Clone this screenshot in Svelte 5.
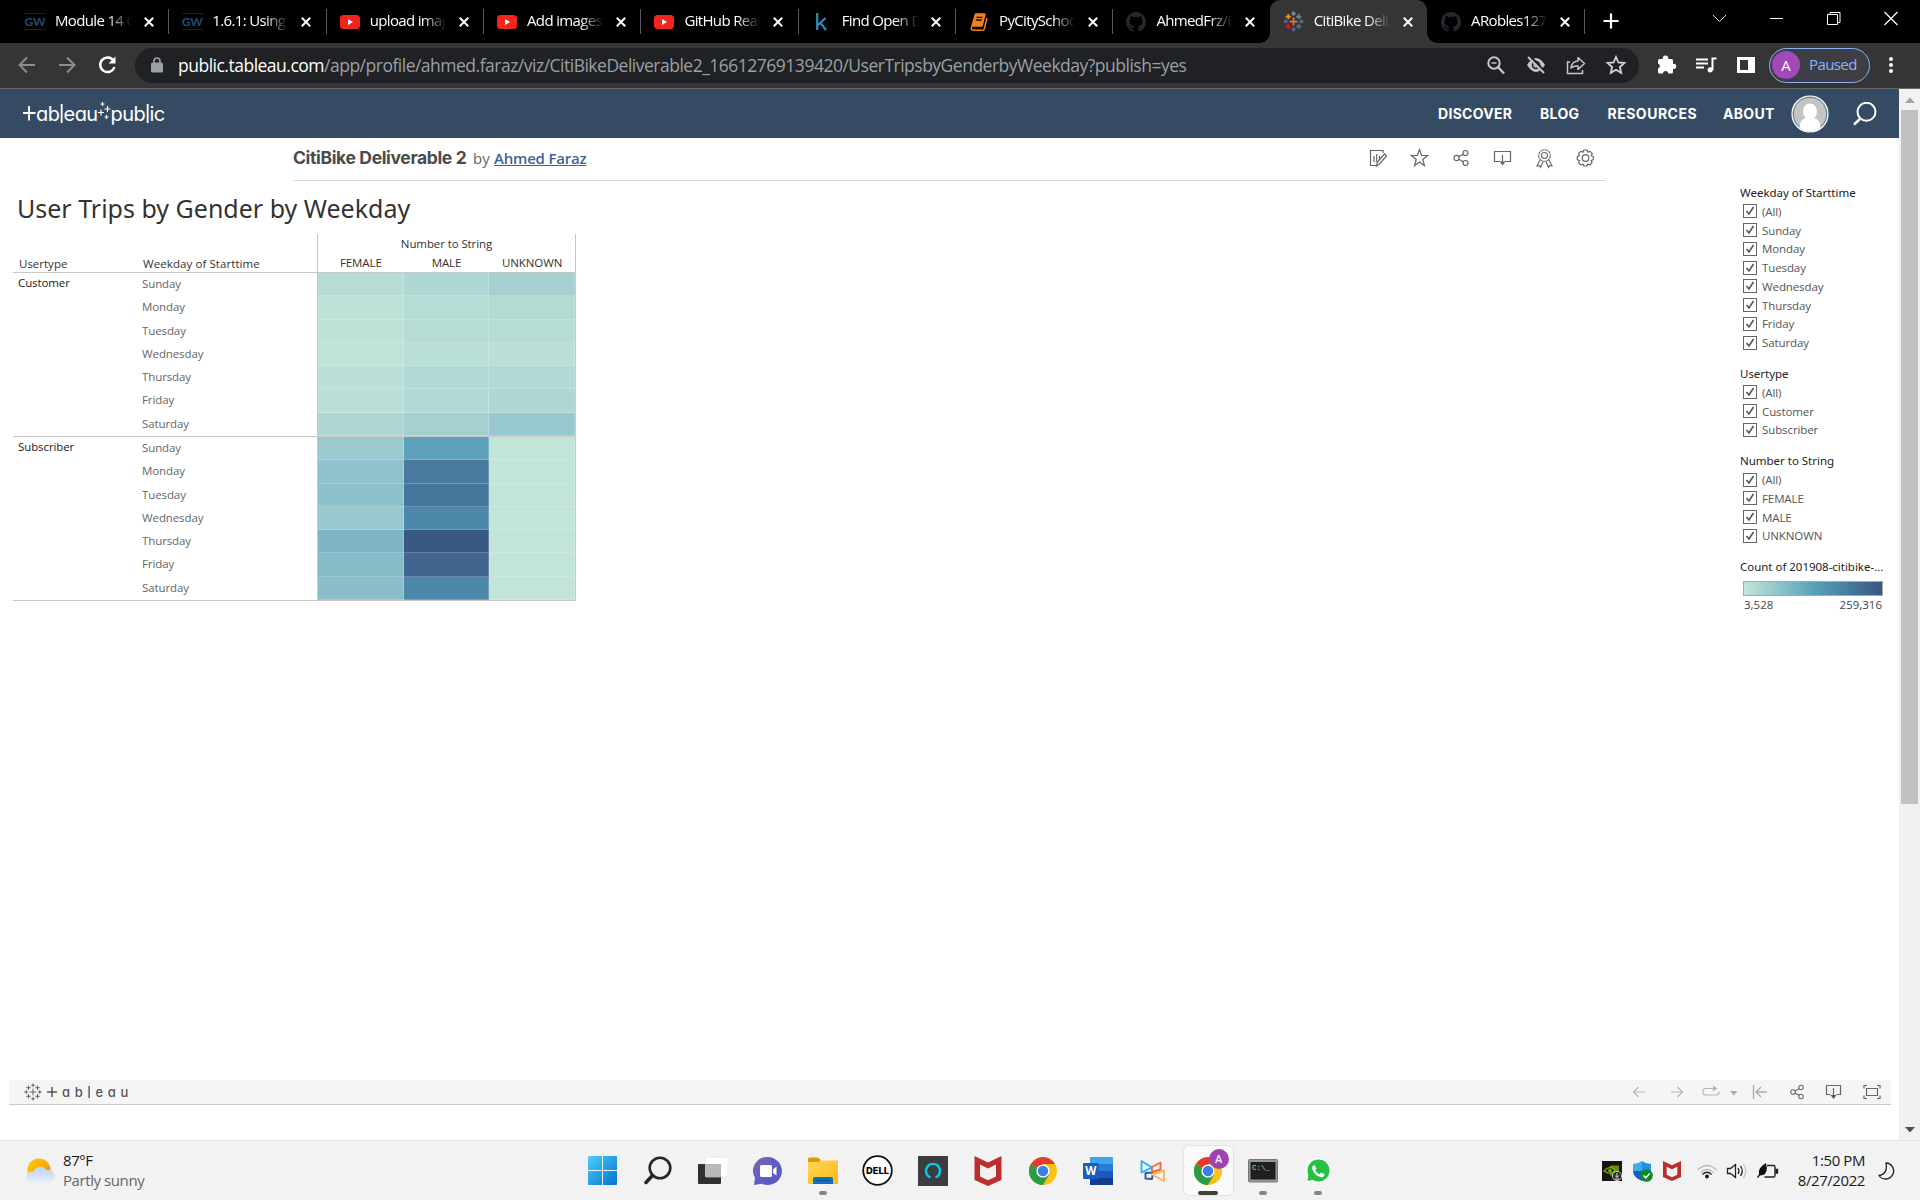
<script>
  const tabs = [
    { icon: 'gw', title: 'Module 14 C' },
    { icon: 'gw', title: '1.6.1: Using' },
    { icon: 'yt', title: 'upload imag' },
    { icon: 'yt', title: 'Add images' },
    { icon: 'yt', title: 'GitHub Read' },
    { icon: 'kaggle', title: 'Find Open D' },
    { icon: 'book', title: 'PyCitySchoo' },
    { icon: 'github', title: 'AhmedFrz/B' },
    { icon: 'tableau', title: 'CitiBike Deli', active: true },
    { icon: 'github', title: 'ARobles127' }
  ];
  const days = ['Sunday', 'Monday', 'Tuesday', 'Wednesday', 'Thursday', 'Friday', 'Saturday'];
  const columns = ['FEMALE', 'MALE', 'UNKNOWN'];
  const groups = [
    {
      name: 'Customer',
      rows: [
        ['#b6dcd5', '#aed8d4', '#a5cfd1'],
        ['#bfe1d8', '#b5dcd5', '#b3dbd4'],
        ['#bfe1d8', '#b6dcd5', '#b5dcd5'],
        ['#c0e2d9', '#badfd7', '#bbdfd7'],
        ['#bddfd8', '#b3d9d6', '#b1d9d5'],
        ['#bcdfd7', '#b1d9d6', '#aed7d3'],
        ['#aed7d3', '#a4d0d2', '#97c8cf']
      ]
    },
    {
      name: 'Subscriber',
      rows: [
        ['#9ac9ce', '#5da1ba', '#c3e4d9'],
        ['#90c1cc', '#487b9f', '#c3e4d9'],
        ['#8cc0ca', '#45769b', '#c3e4d9'],
        ['#99c9ce', '#4c88aa', '#c3e4d9'],
        ['#7eb6c5', '#395984', '#c3e4d9'],
        ['#86bbc8', '#41658f', '#c3e4d9'],
        ['#8bbdca', '#4c88aa', '#c3e4d9']
      ]
    }
  ];
  const filters = [
    { name: 'Weekday of Starttime', items: ['(All)', ...days] },
    { name: 'Usertype', items: ['(All)', 'Customer', 'Subscriber'] },
    { name: 'Number to String', items: ['(All)', ...columns] }
  ];
  const marks = [[12, 12, 4.5], [12, 3, 2.4], [12, 21, 2.4], [3, 12, 2.4], [21, 12, 2.4], [6, 6.3, 3], [18, 6.3, 3], [6, 17.7, 3], [18, 17.7, 3]];
  const markColors = ['#e8762d', '#7099a6', '#5b6591', '#5b6591', '#5b6591', '#eb912c', '#5b879b', '#c72035', '#4f6d9b'];
</script>

{#snippet github()}
  <svg width="20" height="20" viewBox="0 0 16 16"><path fill="#24292f" d="M8 0C3.58 0 0 3.58 0 8c0 3.54 2.29 6.53 5.47 7.59.4.07.55-.17.55-.38 0-.19-.01-.82-.01-1.49-2.01.37-2.53-.49-2.69-.94-.09-.23-.48-.94-.82-1.13-.28-.15-.68-.52-.01-.53.63-.01 1.08.58 1.23.82.72 1.21 1.87.87 2.33.66.07-.52.28-.87.51-1.07-1.78-.2-3.64-.89-3.64-3.95 0-.87.31-1.59.82-2.15-.08-.2-.36-1.02.08-2.12 0 0 .67-.21 2.2.82a7.6 7.6 0 014 0c1.53-1.04 2.2-.82 2.2-.82.44 1.1.16 1.92.08 2.12.51.56.82 1.27.82 2.15 0 3.07-1.87 3.75-3.65 3.95.29.25.54.73.54 1.48 0 1.07-.01 1.93-.01 2.2 0 .21.15.46.55.38A8.01 8.01 0 0016 8c0-4.42-3.58-8-8-8z" /></svg>
{/snippet}

{#snippet tableauMark(size, mono)}
  <svg width={size} height={size} viewBox="0 0 24 24" fill="none">
    {#each marks as [x, y, r], i}
      <path d="M{x - r} {y}h{2 * r}M{x} {y - r}v{2 * r}" stroke={mono ? '#555' : markColors[i]} stroke-width={mono ? 1.2 : 2} />
    {/each}
  </svg>
{/snippet}

{#snippet favicon(kind)}
  {#if kind === 'gw'}
    <span class="gw">GW</span>
  {:else if kind === 'yt'}
    <svg width="20" height="20" viewBox="0 0 20 20"><rect y="3" width="20" height="14" rx="3.5" fill="#f2241b" /><path d="M8 7l5 3-5 3z" fill="#fff" /></svg>
  {:else if kind === 'kaggle'}
    <svg width="20" height="20" viewBox="0 0 20 20" fill="none" stroke="#2c8ebb" stroke-width="2.2"><path d="M5.2 1v17M13.5 6L6 13M8.3 10.6l5.6 7.4" /></svg>
  {:else if kind === 'book'}
    <svg width="20" height="20" viewBox="0 0 20 20" fill="none"><path d="M6.500 2H16L13 14H3z" fill="#f37f1c" stroke="#f37f1c" stroke-width="1.500" stroke-linejoin="round" /><path d="M3 14q-2 3.800 .8 4.200h9.700q1.500 0 1.900-1.500L18 6" stroke="#f37f1c" stroke-width="1.500" /><path d="M7.500 5.300h6M6.800 8h6" stroke="#1c1208" stroke-width="1.300" /></svg>
  {:else if kind === 'github'}
    {@render github()}
  {:else}
    {@render tableauMark(21, false)}
  {/if}
{/snippet}

{#snippet shareNodes(size)}
  <svg width={size} height={size} viewBox="0 0 18 18" fill="none" stroke="#666" stroke-width="1.2"><circle cx="4.500" cy="9" r="2.600" /><circle cx="13.500" cy="4" r="2.500" /><circle cx="13.500" cy="14" r="2.500" /><path d="M6.800 7.800l4.500-2.500M6.800 10.200l4.500 2.500" /></svg>
{/snippet}

{#snippet chrome()}
  <svg width="28" height="28" viewBox="0 0 28 28">
    <circle cx="14" cy="14" r="14" fill="#fbc116" />
    <path d="M14 14L1.880 7A14 14 0 0 0 14 28L20.060 17.500z" fill="#2c9b47" />
    <path d="M14 14L1.880 7A14 14 0 0 1 26.120 7H14z" fill="#e33b2e" />
    <path d="M7.900 17.500L1.880 7A14 14 0 0 0 12.500 27.900z" fill="#2c9b47" />
    <circle cx="14" cy="14" r="6.600" fill="#fff" /><circle cx="14" cy="14" r="5.200" fill="#3b7ded" />
  </svg>
{/snippet}

{#snippet mcafee(size)}
  <svg width={size} height={size} viewBox="0 0 27 30"><path d="M0 0l13.500 6.500L27 0v24l-13.500 6L0 24z" fill="#bd2d2d" /><path d="M5.500 8.500l8 4 8-4v12l-8 3.800-8-3.800z" fill="#f2f2f2" /></svg>
{/snippet}

<div class="screen">
  <div class="tabstrip">
    {#each tabs as tab, i}
      <div class="tab" class:active={tab.active} class:plain={i === 7}>
        <span class="fav">{@render favicon(tab.icon)}</span>
        <span class="tab-title">{tab.title}</span>
        <svg class="x" width="10" height="10" viewBox="0 0 10 10"><path d="M.8.800l8.400 8.400M9.200.800L.8 9.200" stroke="#fff" stroke-width="2" /></svg>
      </div>
    {/each}
    <svg class="plus" width="16" height="16" viewBox="0 0 16 16"><path d="M8 .500v15M.500 8h15" stroke="#fff" stroke-width="2.200" /></svg>
    <div class="window-buttons">
      <svg width="57" height="36" fill="none" stroke="#ddd"><path d="M22 15l6.500 6.500L35 15" /></svg>
      <svg width="57" height="36" fill="none" stroke="#fff"><path d="M22 18.500h13" /></svg>
      <svg width="57" height="36" fill="none" stroke="#fff"><path d="M22.500 14.500h10v10h-10zM25 14.500v-2h10v10h-2" /></svg>
      <svg width="57" height="36" fill="none" stroke="#fff" stroke-width="1.200"><path d="M22.500 12l13 13M35.500 12l-13 13" /></svg>
    </div>
  </div>

  <div class="toolbar">
    <div class="nav-buttons">
      <svg width="40" height="34" fill="none" stroke="#8d8d8d" stroke-width="2"><path d="M28 17H13M20 9.500L12.500 17l7.500 7.500" /></svg>
      <svg width="40" height="34" fill="none" stroke="#8d8d8d" stroke-width="2"><path d="M12 17h15M20 9.500l7.500 7.500-7.500 7.500" /></svg>
      <svg width="40" height="34" fill="none" stroke="#fff" stroke-width="2.400"><path d="M26.500 12.500a7.300 7.300 0 1 0 1 6.500" /><path d="M28.500 8.500v7h-7z" fill="#fff" stroke="none" /></svg>
    </div>
    <div class="address">
      <svg class="lock" width="12" height="16" viewBox="0 0 12 16"><rect y="5.500" width="12" height="10" rx="1.500" fill="#9aa0a6" /><path d="M3 6V4a3 3 0 0 1 6 0v2" fill="none" stroke="#9aa0a6" stroke-width="1.600" /></svg>
      <span class="url"><b>public.tableau.com</b>/app/profile/ahmed.faraz/viz/CitiBikeDeliverable2_16612769139420/UserTripsbyGenderbyWeekday?publish=yes</span>
      <div class="address-icons">
        <svg width="40" height="34" fill="none" stroke="#c4c7c5" stroke-width="2"><circle cx="18" cy="15" r="5.700" /><path d="M22 19l6 6.500" stroke-width="2.400" /><path d="M15.500 15h5" stroke-width="1.500" /></svg>
        <svg width="40" height="34" viewBox="0 0 40 34"><path d="M11 17q9-14 18 0q-9 14-18 0z" fill="#c4c7c5" /><circle cx="20" cy="17" r="4.300" fill="#202124" /><circle cx="20" cy="17" r="2.600" fill="#c4c7c5" /><path d="M13 8l16 17" stroke="#202124" stroke-width="4" /><path d="M12 9l16 16" stroke="#c4c7c5" stroke-width="2" /></svg>
        <svg width="40" height="34" fill="none" stroke="#c4c7c5" stroke-width="1.500"><path d="M14 14h-2.500v11.500h15V22" /><path d="M15 20q1-7 7-7V9.500l6.500 6-6.500 6V18q-4-.5-7 2z" stroke-linejoin="round" /></svg>
        <svg width="40" height="34" fill="none" stroke="#d0d3d1" stroke-width="1.800"><path d="M20 9l2.400 5.500 6 .5-4.500 4 1.300 5.800L20 21.700l-5.200 3.100 1.300-5.800-4.500-4 6-.5z" /></svg>
      </div>
    </div>
    <div class="extensions">
      <svg width="40" height="34" fill="#fff"><path d="M13.500 11h3.300a2.800 2.800 0 1 1 5.400 0h3.300a1.500 1.500 0 0 1 1.500 1.500v3.400a2.600 2.600 0 1 1 0 5V24a1.500 1.500 0 0 1-1.500 1.500h-3.300a2.600 2.600 0 0 0-5.200 0h-3.500A1.500 1.500 0 0 1 12 24v-3.500a2.600 2.600 0 0 0 0-5v-3a1.500 1.500 0 0 1 1.500-1.500z" /></svg>
      <svg width="40" height="34" fill="none" stroke="#fff" stroke-width="2"><path d="M10 11.500h12M10 15.500h12M10 19.500h8M26.500 22V10.500h4" /><circle cx="24.200" cy="21.800" r="2.600" fill="#fff" stroke="none" /></svg>
      <svg width="40" height="34"><path d="M11 9h18v16H11zM14 12v10h8V12z" fill="#fff" fill-rule="evenodd" /></svg>
    </div>
    <div class="paused"><span class="a-badge">A</span><span class="paused-label">Paused</span></div>
    <svg class="dots" width="6" height="18" fill="#fff"><circle cx="3" cy="3" r="2" /><circle cx="3" cy="9" r="2" /><circle cx="3" cy="15" r="2" /></svg>
  </div>

  <div class="page">
    <div class="content">
      <header class="site-header">
        <div class="logo">
          <svg width="13" height="24" viewBox="0 0 13 24"><path d="M0 11h12.500M6 4v14.500" stroke="#fff" stroke-width="1.800" /></svg>
          <span>ab<i>l</i>eau</span>
          <svg width="13" height="24" viewBox="0 0 13 24"><path d="M4.500 0v4M2.500 2h4M0 10.500h6M3 7.500v6M6.500 7h6M9.500 4v6M6.500 15h4M8.500 13v4" stroke="#fff" stroke-width="1.200" /></svg>
          <span>pub<i>l</i>ic</span>
        </div>
        <nav>
          <span class="n1">DISCOVER</span><span class="n2">BLOG</span><span class="n3">RESOURCES</span><span class="n4">ABOUT</span>
        </nav>
        <svg class="avatar" width="38" height="38" viewBox="0 0 38 38"><circle cx="19" cy="19" r="18" fill="#c4c4c4" stroke="#fff" stroke-width="1.200" /><circle cx="19" cy="19" r="16.700" fill="none" stroke="#62748a" /><ellipse cx="19" cy="16.500" rx="7" ry="8" fill="#fff" /><path d="M8.500 33q0-9 7-10h7q7 1 7 10-10 7-21 0z" fill="#fff" /></svg>
        <svg class="find" width="24" height="24" fill="none" stroke="#fff" stroke-width="2"><circle cx="13.500" cy="9.800" r="9" /><path d="M7 17L1 22.500" stroke-width="2.400" /></svg>
      </header>

      <div class="viz-head">
        <h1>CitiBike Deliverable 2</h1>
        <span class="by">by</span>
        <span class="author">Ahmed Faraz</span>
        <div class="viz-actions">
          <svg width="41.500" height="22" fill="none" stroke="#666" stroke-width="1.200"><path d="M25 6V3.500H12.500v15H19M16 9v6M18.700 7v8M21.500 9v4" /><path d="M18.500 19l1-4 7-8 2 2-7 8z" /></svg>
          <svg width="41.500" height="22" fill="none" stroke="#666" stroke-width="1.200"><path d="M20.500 2.500l2.100 6h6l-4.800 4 1.700 6.200-5-3.600-5 3.600 1.700-6.200-4.800-4h6z" /></svg>
          <span class="cell">{@render shareNodes(18)}</span>
          <svg width="41.500" height="22" fill="none" stroke="#666" stroke-width="1.200"><path d="M18 14.500h-5.500v-10h16v10H23M20.500 8v8" /><path d="M17.500 14.500h6l-3 4z" fill="#666" stroke="none" /></svg>
          <svg width="41.500" height="22" fill="none" stroke="#666" stroke-width="1.100"><circle cx="20.500" cy="8.500" r="5.800" stroke-dasharray="3.200 .6" /><circle cx="20.500" cy="8.500" r="3" /><path d="M16 13l-3 6 2.500-.5 1 2 2.500-6M25 13l3 6-2.500-.5-1 2-2.500-6" /></svg>
          <svg width="41" height="22" fill="none" stroke="#666" stroke-width="1.200"><path d="M18.800 3h3.400l.6 2.300 2.200-1 2.300 2.400-1.200 2 2.200.8v3.200l-2.200.8 1 2.200-2.300 2.300-2.200-1-.6 2h-3.200l-.8-2-2.200 1-2.300-2.300 1-2.200-2.200-.8V9.500l2.200-.8-1-2 2.300-2.400 2.200 1z" stroke-linejoin="round" /><circle cx="20.500" cy="11" r="3.300" /></svg>
        </div>
      </div>

      <div class="viz">
        <div class="sheet">
          <h2>User Trips by Gender by Weekday</h2>
          <div class="table">
            <div class="thead">
              <span class="h-user">Usertype</span>
              <span class="h-day">Weekday of Starttime</span>
              <div class="h-cols">
                <span class="h-top">Number to String</span>
                {#each columns as c}<span>{c}</span>{/each}
              </div>
            </div>
            {#each groups as group}
              <div class="group">
                <span class="g-name">{group.name}</span>
                <div class="g-rows">
                  {#each group.rows as row, r}
                    <div class="row">
                      <span class="day">{days[r]}</span>
                      {#each row as color}<span class="heat" style="background-color: {color}"></span>{/each}
                    </div>
                  {/each}
                </div>
              </div>
            {/each}
          </div>
        </div>
        <aside>
          {#each filters as filter}
            <section>
              <h3>{filter.name}</h3>
              {#each filter.items as item}
                <div class="option">
                  <svg width="14" height="14" fill="none"><rect x=".5" y=".5" width="13" height="13" stroke="#666" /><path d="M3.500 7l2.500 3 4.500-7" stroke="#555" stroke-width="1.600" /></svg>
                  <span>{item}</span>
                </div>
              {/each}
            </section>
          {/each}
          <section class="legend">
            <h3>Count of 201908-citibike-...</h3>
            <div class="ramp"></div>
            <div class="range"><span>3,528</span><span>259,316</span></div>
          </section>
        </aside>
      </div>

      <footer class="viz-footer">
        {@render tableauMark(18, true)}
        <svg class="t-plus" width="10" height="12"><path d="M0 6h10M5 1v10" stroke="#555" stroke-width="1.500" /></svg>
        <span class="wordmark">ab<i>l</i>eau</span>
        <div class="footer-actions">
          <svg width="38" height="20" fill="none" stroke="#b5b5b5" stroke-width="1.200"><path d="M25 10H13.500M18.500 5l-5 5 5 5" /></svg>
          <svg width="38" height="20" fill="none" stroke="#b5b5b5" stroke-width="1.200"><path d="M13 10h11.500M19.500 5l5 5-5 5" /></svg>
          <svg width="30" height="20" fill="none" stroke="#b5b5b5" stroke-width="1.200"><path d="M18 6.500H9.500a2.500 2.500 0 0 0-2.500 2.500v1.500a2.500 2.500 0 0 0 2.500 2.500h11a2.500 2.500 0 0 0 2.500-2.500V9.500" /><path d="M17 3.500l4.500 3-4.500 3z" fill="#b5b5b5" stroke="none" /></svg>
          <svg width="16" height="20"><path d="M4 9h7.500l-3.700 4.500z" fill="#aaa" /></svg>
          <svg width="36" height="20" fill="none" stroke="#aaa" stroke-width="1.300"><path d="M11.500 3v14M25 10H14M19 5l-5 5 5 5" /></svg>
          <span class="cell37">{@render shareNodes(16)}</span>
          <svg width="38" height="20" fill="none" stroke="#666" stroke-width="1.200"><path d="M15.500 12.500h-4v-9h14v9h-4M18.500 6v8" /><path d="M15.500 13h6l-3 4z" fill="#555" stroke="none" /></svg>
          <svg width="38" height="20" fill="none" stroke="#666" stroke-width="1.200"><path d="M13.500 6.500h11v7h-11zM11 6.500v-3h3M24 3.500h3v3M27 13.500v3h-3M14 16.500h-3v-3" /></svg>
        </div>
      </footer>
    </div>
    <div class="scrollbar">
      <svg width="21" height="21"><path d="M6 14h10l-5-5.500z" fill="#a3a3a3" /></svg>
      <div class="thumb"></div>
      <svg width="21" height="21"><path d="M6 8h10l-5 5.500z" fill="#505050" /></svg>
    </div>
  </div>

  <div class="taskbar">
    <svg class="sun" width="30" height="28" viewBox="0 0 30 28">
      <defs>
        <linearGradient id="sunFill" x2="1" y2="1"><stop stop-color="#ffd000" /><stop offset="1" stop-color="#f38a10" /></linearGradient>
        <linearGradient id="cloudFill" x2="0" y2="1"><stop stop-color="#bcd4f2" /><stop offset="1" stop-color="#e9eff8" /></linearGradient>
      </defs>
      <circle cx="14" cy="13" r="11.500" fill="url(#sunFill)" />
      <path d="M7 26a5.700 5.700 0 1 1 1.600-11.200 7 7 0 0 1 12.800-1.500A6.500 6.500 0 1 1 23 26z" fill="url(#cloudFill)" />
    </svg>
    <div class="weather"><span>87°F</span><span class="dim">Partly sunny</span></div>
    <div class="apps">
      <div class="app">
        <svg width="29" height="29"><defs><linearGradient id="win" x2="1" y2="1"><stop stop-color="#4cd0fc" /><stop offset="1" stop-color="#0071cf" /></linearGradient></defs><path d="M1 0h13v14H0V1zM15 0h13q1 0 1 1v13H15zM0 15h14v14H1q-1 0-1-1zM15 15h14v13q0 1-1 1H15z" fill="url(#win)" /></svg>
      </div>
      <div class="app"><svg width="28" height="29" fill="none" stroke="#262626"><circle cx="16" cy="12" r="10.300" stroke-width="2.600" fill="#f0f0f0" /><path d="M8.500 19.500L2 26.500" stroke-width="3.500" stroke-linecap="round" /></svg></div>
      <div class="app"><svg width="30" height="30"><rect y="8" width="23" height="20" rx="1" fill="#30302f" /><rect x="7.500" y="1" width="22.500" height="20" rx="1" fill="#fff" stroke="#ddd" stroke-width=".6" /><path d="M7.500 8H23v13H7.500z" fill="#b9b9b9" /></svg></div>
      <div class="app"><svg width="30" height="30"><defs><linearGradient id="chat" x2="1" y2="1"><stop stop-color="#8a62a8" /><stop offset=".5" stop-color="#5c5fc6" /><stop offset="1" stop-color="#5b56c4" /></linearGradient></defs><path d="M15 1a14 14 0 1 1-6 26.700L1 29l1-7A14 14 0 0 1 15 1z" fill="url(#chat)" /><rect x="7" y="9" width="12" height="12" rx="1.500" fill="#fff" /><path d="M20 13.500l3.500-3v9L20 17z" fill="#fff" /></svg></div>
      <div class="app">
        <svg width="30" height="30"><defs><linearGradient id="folder" x2="1" y2="1"><stop stop-color="#ffd65a" /><stop offset="1" stop-color="#fbb914" /></linearGradient></defs><path d="M0 3q0-1.500 1.500-1.500H10l3 3V9H0z" fill="#dd9a07" /><path d="M0 6h10l3-1.500h17V28H0z" fill="url(#folder)" /><path d="M5 28v-5q0-2 2-2h16q2 0 2 2v5z" fill="#0f6fc3" /><path d="M9 24.500h13" stroke="#0b4f92" /></svg>
        <span class="run"></span>
      </div>
      <div class="app"><svg width="31" height="31"><circle cx="15.500" cy="15.500" r="14.300" fill="#fff" stroke="#111" stroke-width="1.800" /><text x="15.500" y="19" text-anchor="middle" textLength="23" lengthAdjust="spacingAndGlyphs" font-family="Inter, sans-serif" font-weight="800" font-size="9.500">DELL</text></svg></div>
      <div class="app"><svg width="30" height="30"><path d="M0 0h30v30H0z" fill="#3d3d3d" /><path d="M12.500 21.500a7 7 0 1 1 5 0" fill="none" stroke="#05c8f5" stroke-width="2.300" /></svg></div>
      <div class="app">{@render mcafee(30)}</div>
      <div class="app">{@render chrome()}</div>
      <div class="app"><svg width="30" height="30"><path d="M7 1h23v7H7z" fill="#41a5ee" /><path d="M7 8h23v7H7z" fill="#2b7cd3" /><path d="M7 15h23v7H7z" fill="#185abd" /><path d="M7 22h23v7H7z" fill="#103f91" /><rect y="7" width="15.500" height="16" rx="1" fill="#1a5dbe" /><text x="7.700" y="19" text-anchor="middle" font-family="Open Sans, sans-serif" font-weight="700" font-size="11.500" fill="#fff">W</text></svg></div>
      <div class="app"><svg width="26" height="24" fill="none" stroke-width="1.900" stroke-linejoin="round"><path d="M5.500 14v5.500l6.500.5 1-6.500z" stroke="#2c5f9e" /><path d="M1.500 2v11.500L12 8.500z" stroke="#25b6ee" /><path d="M12 8l8.500-4.500v7L12 13z" stroke="#ef6b45" /><path d="M12 15.500l12-4v10.500z" stroke="#fbb45c" /></svg></div>
      <div class="app open">
        {@render chrome()}
        <span class="corner">A</span>
        <span class="run wide"></span>
      </div>
      <div class="app">
        <svg width="30" height="24"><rect x=".5" y=".5" width="29" height="22.500" rx="1" fill="#999" stroke="#777" /><rect x="2.500" y="3" width="25" height="17.500" fill="#1f1f1f" /><text x="4" y="11" font-family="Liberation Mono, monospace" font-size="7.500" fill="#ccc">C:\_</text></svg>
        <span class="run"></span>
      </div>
      <div class="app">
        <svg width="28" height="28"><path d="M14 1a12.800 12.800 0 1 1-6 24.300L1 27l1.700-6.300A12.800 12.800 0 0 1 14 1z" fill="#fbfbfb" /><circle cx="14.500" cy="13.500" r="11" fill="#26c143" /><path d="M4.500 17l-1 7 6-1.500z" fill="#26c143" /><path d="M10.500 8l2 3.500-1.300 1.800q1.500 2.700 4.300 4l1.700-1.800 3.300 1.800q-.3 3-3 3-7-1-9.500-9 0-2.800 2.500-3.300z" fill="#fff" /></svg>
        <span class="run"></span>
      </div>
    </div>
    <div class="tray">
      <svg width="30" height="24" viewBox="-5 -2 30 24"><path d="M0 0h20v20H0z" fill="#151515" /><path d="M8 4.500h9v10H8z" fill="#5f9500" /><path d="M2 10q5-6 11-1-4 6-11 1z" fill="#151515" stroke="#76b900" stroke-width="1.200" /><circle cx="8" cy="9.800" r="1.800" fill="#76b900" /><circle cx="15" cy="15" r="4.600" fill="#222" stroke="#ccc" /><path d="M15 12v4M13 14.500l2 2 2-2M12.800 18h4.400" stroke="#eee" fill="none" /></svg>
      <svg width="30" height="24" viewBox="-6 -2 30 24"><path d="M9 0q4 3 9 3v7H9z" fill="#1d94e5" /><path d="M9 0Q5 3 0 3v7h9z" fill="#38b0ee" /><path d="M0 10q0 6 9 10V10z" fill="#0f61bd" /><path d="M18 10q0 6-9 10V10z" fill="#1270cc" /><circle cx="13.500" cy="14.500" r="6.300" fill="#108a1e" /><path d="M10.500 14.500l2.200 2.300 4-4.300" stroke="#fff" stroke-width="1.500" fill="none" /></svg>
      <span class="tray-cell">{@render mcafee(20)}</span>
      <svg class="gap" width="30" height="24" fill="none"><path d="M5.500 11q9.500-9 19 0M8.500 13.500q6.500-6 13 0" stroke="#bbb" stroke-width="1.300" /><path d="M10.500 15.500q4.500-4.500 9 0" stroke="#222" stroke-width="1.300" /><circle cx="15" cy="17.500" r="1.900" fill="#111" /></svg>
      <svg width="30" height="24" fill="none" stroke="#222" stroke-width="1.300"><path d="M5.500 9.500h3l5-4v13l-5-4h-3zM16 9q2 3 0 6M18.500 7q3.500 5 0 10" /><path d="M21.500 5q4.500 7 0 14" stroke="#c4c4c4" /></svg>
      <svg width="30" height="24" fill="none" stroke="#222" stroke-width="1.400"><path d="M15 6.500h6.500q1.500 0 1.500 1.500v8.500q0 1.500-1.500 1.500H12.500" /><path d="M24 10.500h1.500v3.500H24z" fill="#222" /><path d="M14 4q2.500 10-3 12l-3 .5-2 2.500-1-1 2-2.500q-1.500-7 7-11.500z" fill="#111" stroke="none" /></svg>
      <div class="clock"><span>1:50 PM</span><span>8/27/2022</span></div>
      <svg class="moon" width="17" height="18" fill="none" stroke="#222" stroke-width="1.300"><path d="M8 1a8 8 0 1 1-7 12.500Q10 12 8 1z" stroke-linejoin="round" /></svg>
    </div>
  </div>
</div>

<style>
  :global(body) { margin: 0; overflow: hidden; }
  svg { display: block; flex: none; }
  .screen { width: 1920px; height: 1200px; display: flex; flex-direction: column; background: #fff; font-family: 'Open Sans', 'Noto Sans', sans-serif; }
  span, h1, h2, h3 { white-space: nowrap; }

  .tabstrip { display: flex; height: 43px; padding-left: 11px; background: #000; box-sizing: border-box; }
  .tab { width: 157.350px; height: 43px; display: flex; align-items: center; box-sizing: border-box; padding-left: 14px; position: relative; flex: none; }
  .tab::after { content: ''; position: absolute; right: -1px; top: 9px; width: 1px; height: 25px; background: #5a5a5a; }
  .tab.plain::after, .tab.active::after { display: none; }
  .tab.active { background: #353535; border-radius: 10px 10px 0 0; }
  .tab.active::before { content: ''; position: absolute; left: -10px; right: -10px; bottom: 0; height: 10px; background: radial-gradient(circle at 0 0, transparent 9.500px, #353535 10px) left / 10px 10px no-repeat, radial-gradient(circle at 100% 0, transparent 9.500px, #353535 10px) right / 10px 10px no-repeat; }
  .fav { width: 20px; height: 21px; display: flex; align-items: center; justify-content: center; margin-right: 10px; flex: none; }
  .gw { font: 700 12px 'Lato', sans-serif; color: #1f4b77; border-top: 1px solid #0e2438; border-bottom: 1px solid #0e2438; }
  .tab-title { width: 78px; overflow: hidden; color: #fff; font-size: 15px; line-height: 20px; letter-spacing: -0.650px; margin-top: -3px; -webkit-mask-image: linear-gradient(90deg, #000 68%, transparent 98%); mask-image: linear-gradient(90deg, #000 68%, transparent 98%); }
  .x { margin-left: 11px; }
  .plus { margin: 13px 0 0 19px; }
  .window-buttons { display: flex; margin: 0 1px 0 auto; }

  .toolbar { display: flex; align-items: center; height: 46px; box-sizing: border-box; padding: 0 0 1px 7px; background: #353535; border-bottom: 1px solid #666; }
  .nav-buttons { display: flex; width: 128px; }
  .address { display: flex; align-items: center; width: 1504px; height: 35px; border-radius: 18px; background: #202124; box-sizing: border-box; padding: 0 3px 0 16px; }
  .lock { margin-right: 15px; }
  .url { color: #9aa0a6; font-size: 17.500px; letter-spacing: -0.500px; line-height: 24px; margin-top: -1px; }
  .url b { color: #fff; font-weight: 400; }
  .address-icons { display: flex; margin-left: auto; }
  .extensions { display: flex; margin-left: 7px; width: 123px; }
  .paused { display: flex; align-items: center; width: 101px; height: 35px; box-sizing: border-box; border: 1.500px solid #8ab4f8; border-radius: 18px; background: #3d3d44; color: #8ab4f8; padding-left: 2px; }
  .a-badge { width: 28px; height: 28px; border-radius: 50%; background: #a149b8; color: #fff; font-size: 15px; line-height: 28px; text-align: center; }
  .paused-label { font-size: 15px; letter-spacing: -0.600px; margin: -2px 0 0 9px; }
  .dots { margin-left: 18px; }

  .page { display: flex; height: 1051px; flex: none; }
  .content { width: 1899px; display: flex; flex-direction: column; }
  .site-header { height: 49px; display: flex; align-items: center; background: #354b63; padding-left: 23px; box-sizing: border-box; flex: none; }
  .logo { display: flex; align-items: center; color: #fff; width: 1415px; font: 400 20px 'Inter', sans-serif; font-feature-settings: 'cv11'; }
  .logo span { line-height: 24px; letter-spacing: -0.580px; }
  .logo i, .wordmark i { font-style: normal; display: inline-block; transform: scaleY(1.250); }
  nav { display: flex; color: #fff; font: 700 14px 'Inter', 'Roboto', sans-serif; letter-spacing: 0.300px; margin-top: -1px; }
  .n1 { width: 102px; } .n2 { width: 67.500px; } .n3 { width: 115.500px; letter-spacing: 0.500px; } .n4 { width: 68px; }
  .find { margin-left: 24px; }

  .viz-head { display: flex; align-items: baseline; height: 43px; width: 1313px; box-sizing: border-box; margin-left: 293px; padding-top: 8px; border-bottom: 1px solid #d8d8d8; color: #555; flex: none; }
  h1 { margin: 0; font: 700 17.500px/24px 'Inter', sans-serif; letter-spacing: -0.350px; width: 180px; color: #4b4b4b; }
  .by { width: 21px; font-size: 15px; color: #666; }
  .author { font-size: 15px; font-weight: 600; color: #3c6595; text-decoration: underline; letter-spacing: -0.200px; }
  .viz-actions { display: flex; margin: 1px 0 0 auto; align-self: flex-start; }
  .cell { width: 41.500px; height: 22px; display: flex; align-items: center; justify-content: center; }

  .viz { display: flex; justify-content: space-between; height: 899px; flex: none; }
  .sheet { padding-left: 13px; }
  h2 { margin: 0; padding: 8px 0 0 4px; height: 45px; font: 400 25px/38px 'Noto Sans', sans-serif; color: #333; letter-spacing: 0; }
  .table { width: 563px; font-size: 11.500px; letter-spacing: -0.100px; color: #333; }
  .thead { display: flex; height: 39px; box-sizing: border-box; border-bottom: 1px solid #c8c8c8; align-items: flex-end; line-height: 16px; }
  .h-user { width: 124px; padding-left: 6px; letter-spacing: 0; }
  .h-day { width: 174px; letter-spacing: 0.080px; }
  .h-cols { width: 257px; display: grid; grid-template-columns: repeat(3, 1fr); grid-template-rows: 19px 18px; text-align: center; border: solid #c8c8c8; border-width: 0 1px; padding-top: 2px; height: 36px; }
  .h-top { grid-column: 1 / 4; }
  .group { display: flex; height: 164px; box-sizing: border-box; border-bottom: 1px solid #c8c8c8; }
  .g-name { width: 124px; padding: 2px 0 0 5px; line-height: 16px; color: #222; }
  .g-rows { flex: 1; display: grid; grid-template-rows: repeat(7, 1fr); border-right: 1px solid #c8c8c8; }
  .row { display: grid; grid-template-columns: 176px repeat(3, 1fr); }
  .day { color: #666; line-height: 16px; padding-top: 3px; border-right: 1px solid #c8c8c8; }
  .heat { box-shadow: inset -1px -1px 0 rgba(255, 255, 255, 0.220); }

  aside { width: 159px; padding-top: 3px; font-size: 11.500px; color: #333; }
  section { margin-bottom: 13px; }
  h3 { margin: 0; font: 400 11.500px/18px 'Noto Sans', sans-serif; letter-spacing: -0.020px; color: #222; }
  .option { display: flex; align-items: center; gap: 5px; padding-left: 3px; height: 18.750px; color: #555; letter-spacing: -0.100px; }
  .ramp { width: 140px; height: 15px; box-sizing: border-box; margin: 5px 0 0 3px; border: 1px solid #a9a9a0; background: linear-gradient(90deg, #c3e5da, #5aa2bb 50%, #36577f); }
  .range { display: flex; justify-content: space-between; width: 138px; margin-left: 4px; color: #444; line-height: 17px; }

  .viz-footer { display: flex; align-items: center; height: 25px; width: 1882px; box-sizing: border-box; margin-left: 9px; padding: 0 0 1px 15px; background: #f5f5f5; border-bottom: 1px solid #c9c9c9; flex: none; }
  .t-plus { margin-left: 5px; }
  .wordmark { font: 500 13px/20px 'Inter', sans-serif; font-feature-settings: 'cv11'; color: #555; letter-spacing: 4.700px; margin-left: 5px; }
  .footer-actions { display: flex; margin-left: auto; }
  .cell37 { width: 37px; height: 20px; display: flex; align-items: center; justify-content: center; }

  .scrollbar { width: 21px; background: #f1f1f1; display: flex; flex-direction: column; }
  .thumb { width: 17px; height: 694px; margin: 0 0 auto 2px; background: #c1c1c1; }

  .taskbar { height: 60px; display: flex; align-items: center; background: #f2f2f2; box-sizing: border-box; border-top: 1px solid #e2e2e2; padding-left: 25px; font-size: 15px; color: #1b1b1b; flex: none; }
  .weather, .clock { display: flex; flex-direction: column; line-height: 20px; letter-spacing: -0.420px; margin-top: -2px; }
  .weather { margin-left: 8px; width: 512px; }
  .dim { color: #666; }
  .apps { display: flex; }
  .app { width: 55.070px; height: 48px; display: flex; align-items: center; justify-content: center; position: relative; }
  .open::before { content: ''; position: absolute; left: 3px; right: 3px; top: -1px; bottom: 0; border-radius: 5px; background: #fafafa; box-shadow: 0 0 1px 1px #e3e3e3; }
  .open > :global(svg) { position: relative; }
  .run { position: absolute; bottom: 0; left: calc(50% - 4px); width: 8px; height: 4px; border-radius: 2px; background: #868686; }
  .wide { left: calc(50% - 10px); width: 20px; background: #404040; }
  .corner { position: absolute; left: 28px; top: 2px; width: 20px; height: 20px; border-radius: 50%; background: #a043b2; color: #eee; font-size: 11px; font-weight: 600; line-height: 20px; text-align: center; }
  .tray { display: flex; align-items: center; margin-left: auto; }
  .tray-cell { width: 30px; display: flex; justify-content: center; }
  .gap { margin-left: 5px; }
  .clock { width: 83px; text-align: right; }
  .moon { margin: 0 25px 0 13px; }
</style>
